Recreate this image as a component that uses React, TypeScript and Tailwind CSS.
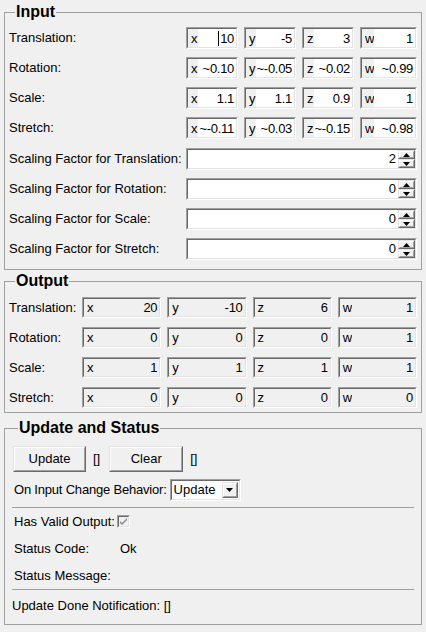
import React, { FC, ReactNode } from 'react';
import { clsx } from 'clsx';

const Sunken: FC<{ className?: string; children?: ReactNode }> = ({ className, children }) => (
  <div className={clsx('border border-t-[#a0a0a0] border-l-[#a0a0a0] border-b-white border-r-white', className)}>
    <div className="flex h-full border border-t-[#696969] border-l-[#696969] border-b-[#e3e3e3] border-r-[#e3e3e3]">
      {children}
    </div>
  </div>
);

const Raised: FC<{ className?: string; children?: ReactNode }> = ({ className, children }) => (
  <div className={clsx('border border-t-[#e3e3e3] border-l-[#e3e3e3] border-b-[#696969] border-r-[#696969] bg-[#f0f0f0]', className)}>
    <div className="flex h-full items-center justify-center border border-t-white border-l-white border-b-[#a0a0a0] border-r-[#a0a0a0]">
      {children}
    </div>
  </div>
);

const TriUp = () => (
  <svg width="7" height="4" viewBox="0 0 7 4"><path d="M3.5 0 L7 4 L0 4 Z" fill="#000" /></svg>
);
const TriDown = () => (
  <svg width="7" height="4" viewBox="0 0 7 4"><path d="M0 0 L7 0 L3.5 4 Z" fill="#000" /></svg>
);

// vector component field: gray axis label + value
const VecField: FC<{ axis: string; value: string; editable?: boolean; caret?: boolean; className?: string }> = ({
  axis, value, editable, caret, className,
}) => (
  <Sunken className={className}>
    <div className="flex items-center bg-[#f0f0f0] pl-[3px] leading-none">{axis}</div>
    <div
      className={clsx(
        'flex flex-1 items-center justify-end overflow-hidden whitespace-nowrap pr-[2px] leading-none tracking-[-0.3px]',
        editable ? 'bg-white' : 'bg-[#f0f0f0]'
      )}
    >
      {caret && <span className="mr-[1px] inline-block h-[15px] w-px bg-black" />}
      {value}
    </div>
  </Sunken>
);

const Spinner: FC<{ value: string }> = ({ value }) => (
  <Sunken className="h-[22px]">
    <div className="flex flex-1 items-center justify-end bg-white pr-[2px]">{value}</div>
    <div className="flex w-[17px] flex-col bg-white">
      <Raised className="flex-1"><TriUp /></Raised>
      <Raised className="flex-1"><TriDown /></Raised>
    </div>
  </Sunken>
);

const Legend: FC<{ children: ReactNode }> = ({ children }) => (
  <legend className="ml-[6px] px-[1px] text-[16px] font-bold leading-[18px]">{children}</legend>
);

const inputVectors: { label: string; values: string[] }[] = [
  { label: 'Translation:', values: ['10', '-5', '3', '1'] },
  { label: 'Rotation:', values: ['~0.10', '~-0.05', '~0.02', '~0.99'] },
  { label: 'Scale:', values: ['1.1', '1.1', '0.9', '1'] },
  { label: 'Stretch:', values: ['~-0.11', '~0.03', '~-0.15', '~0.98'] },
];

const spinners = [
  { label: 'Scaling Factor for Translation:', value: '2' },
  { label: 'Scaling Factor for Rotation:', value: '0' },
  { label: 'Scaling Factor for Scale:', value: '0' },
  { label: 'Scaling Factor for Stretch:', value: '0' },
];

const outputVectors: { label: string; values: string[] }[] = [
  { label: 'Translation:', values: ['20', '-10', '6', '1'] },
  { label: 'Rotation:', values: ['0', '0', '0', '1'] },
  { label: 'Scale:', values: ['1', '1', '1', '1'] },
  { label: 'Stretch:', values: ['0', '0', '0', '0'] },
];

const axes = ['x', 'y', 'z', 'w'];

export default function App() {
  return (
    <div className="h-[632px] w-[426px] overflow-hidden bg-[#f0f0f0] pt-[3px] font-['Liberation_Sans',Arial,sans-serif] text-[13px] text-black">
      {/* Input */}
      <fieldset className="mx-[4px] border border-[#a0a0a0] pb-[9px] pl-[4px] pr-[4px]">
        <Legend>Input</Legend>
        <div className="grid grid-cols-[177px_1fr] gap-y-[8px] pt-[6px]">
          {inputVectors.map((row, r) => (
            <React.Fragment key={row.label}>
              <div className="flex h-[22px] items-center">{row.label}</div>
              <div className="flex gap-x-[6px]">
                {row.values.map((v, i) => (
                  <VecField
                    key={i}
                    axis={axes[i]}
                    value={v}
                    editable
                    caret={r === 0 && i === 0}
                    className={clsx('h-[22px]', i === 3 ? 'flex-1' : 'w-[52px]')}
                  />
                ))}
              </div>
            </React.Fragment>
          ))}
          {spinners.map((s, i) => (
            <React.Fragment key={s.label}>
              <div className={clsx('flex h-[22px] items-center', i === 0 && 'mt-[1px]')}>{s.label}</div>
              <div className={clsx(i === 0 && 'mt-[1px]')}>
                <Spinner value={s.value} />
              </div>
            </React.Fragment>
          ))}
        </div>
      </fieldset>

      {/* Output */}
      <fieldset className="mx-[4px] mt-[2px] border border-[#a0a0a0] pb-[4px] pl-[4px] pr-[4px]">
        <Legend>Output</Legend>
        <div className="grid grid-cols-[73px_1fr] gap-y-[9px] pt-[7px]">
          {outputVectors.map((row) => (
            <React.Fragment key={row.label}>
              <div className="flex h-[21px] items-center">{row.label}</div>
              <div className="grid grid-cols-4 gap-x-[6px]">
                {row.values.map((v, i) => (
                  <VecField key={i} axis={axes[i]} value={v} className="h-[21px]" />
                ))}
              </div>
            </React.Fragment>
          ))}
        </div>
      </fieldset>

      {/* Update and Status */}
      <fieldset className="mx-[4px] mt-[6px] border border-[#a0a0a0] pb-[3px] pl-[7px] pr-[7px]">
        <Legend>Update and Status</Legend>
        <div className="flex items-center pl-[1px] pt-[9px]">
          <Raised className="h-[26px] w-[73px]">Update</Raised>
          <span className="ml-[7px]">[]</span>
          <Raised className="ml-[9px] h-[26px] w-[74px]">Clear</Raised>
          <span className="ml-[7px]">[]</span>
        </div>
        <div className="mt-[7px] flex h-[22px] items-center pl-[2px]">
          <span className="tracking-[-0.2px]">On Input Change Behavior:</span>
          <Sunken className="ml-[3px] h-[22px] w-[71px]">
            <div className="flex flex-1 items-center bg-white pl-[2px]">Update</div>
            <div className="flex bg-white p-px">
              <Raised className="w-[16px]"><TriDown /></Raised>
            </div>
          </Sunken>
        </div>
        <div className="mt-[6px] h-px bg-[#a0a0a0]" />
        <div className="flex h-[27px] items-center pl-[2px]">
          <span className="w-[103px]">Has Valid Output:</span>
          <Sunken className="h-[13px] w-[13px]">
            <div className="flex flex-1 items-center justify-center bg-[#f0f0f0]">
              <svg width="7" height="7" viewBox="0 0 7 7">
                <path d="M0 3 L0 5 L2 7 L7 2 L7 0 L2 5 Z" fill="#8a8a8a" />
              </svg>
            </div>
          </Sunken>
        </div>
        <div className="flex h-[27px] items-center pl-[2px]">
          <span className="w-[106px]">Status Code:</span>
          <span>Ok</span>
        </div>
        <div className="flex h-[27px] items-center pl-[2px]">
          <span>Status Message:</span>
        </div>
        <div className="h-px bg-[#a0a0a0]" />
        <div className="flex h-[31px] items-center">Update Done Notification: []</div>
      </fieldset>
    </div>
  );
}
